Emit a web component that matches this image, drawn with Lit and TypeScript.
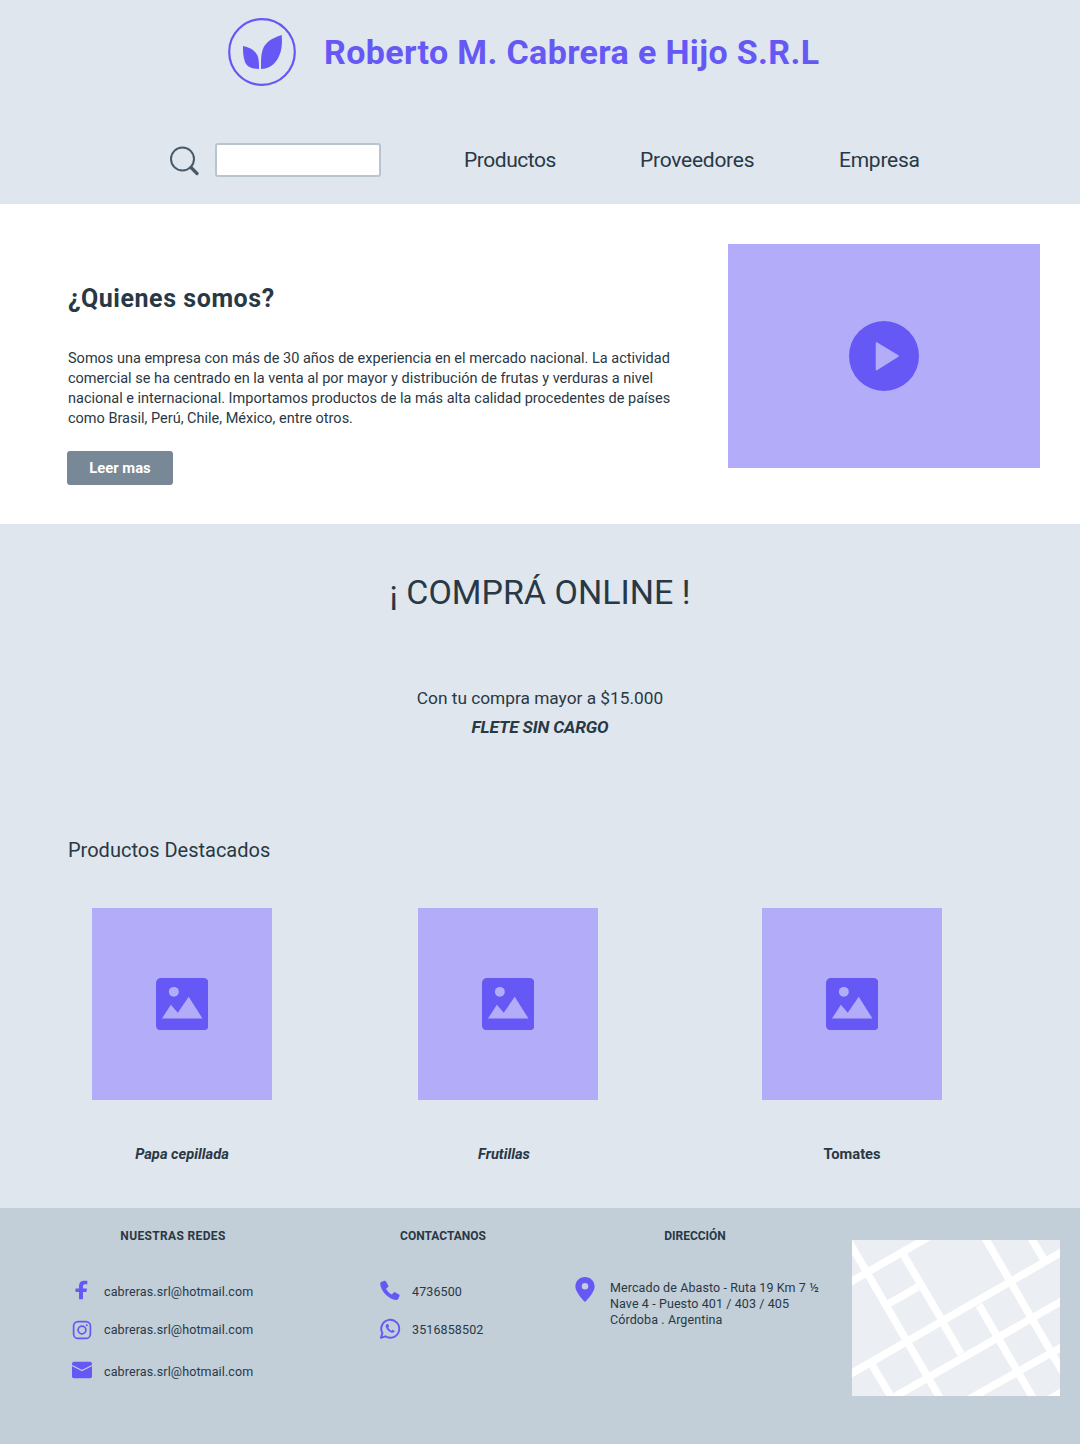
import { LitElement, html, css, svg } from "lit";
import { customElement } from "lit/decorators.js";

const pic = html`<svg class="picicon" viewBox="0 0 53 53"><rect width="53" height="53" rx="5" fill="#6558f5"/><circle cx="18" cy="14" r="5" fill="#b3acf9"/><path d="M6 41 L15 27 L22 35 L33 19 L47 41 Z" fill="#b3acf9"/></svg>`;

const roads = [
  [-5, 44, 80, -5], [-5, 136, 215, 9], [30, 164, 215, 58], [105, 166, 215, 104], [190, 163.5, 215, 149], [36, 64, 66, 47],
  [-4, 0, 92, 165], [51, 14, 91, 82], [132, -4, 216, 141], [178, -4, 192, 20], [91, 83, 109, 114],
  [127, 65, 185, 165], [20, 125, 44, 165],
];

@customElement("app-root")
export class AppRoot extends LitElement {
  static styles = css`
    :host { display: block; width: 1080px; height: 1444px; font-family: Roboto, "Liberation Sans", sans-serif; color: #293845; overflow: hidden; }
    .top { background: #dfe6ee; height: 204px; box-sizing: border-box; padding-top: 18px; }
    .brand { display: flex; align-items: center; height: 68px; padding-left: 228px; gap: 28px; }
    .logo { width: 68px; height: 68px; display: block; }
    .brand h1 { margin: 0; font-size: 34px; font-weight: 700; color: #6558f5; letter-spacing: 0.36px; line-height: 68px; }
    .nav { display: flex; align-items: center; margin-top: 57px; padding-left: 170px; height: 34px; }
    .search { width: 29px; height: 31px; display: block; margin-right: 16px; }
    .input { width: 166px; height: 34px; box-sizing: border-box; background: #fff; border: 2px solid #b8c4ce; border-radius: 3px; margin-right: 83px; }
    .nav a { font-size: 21px; letter-spacing: -0.25px; color: #293845; }
    .nav a:nth-of-type(1) { width: 176px; letter-spacing: -0.45px; }
    .nav a:nth-of-type(2) { width: 199px; }
    .hero { background: #fff; height: 320px; display: flex; justify-content: space-between; padding: 40px 40px 0 68px; box-sizing: border-box; }
    .hero h2 { margin: 40px 0 0; font-size: 25px; line-height: 30px; font-weight: 700; letter-spacing: 0.55px; }
    .hero p { margin: 35px 0 0; font-size: 14.5px; line-height: 20px; white-space: nowrap; }
    .btn { margin: 22px 0 0 -1px; width: 106px; height: 34px; border-radius: 3px; background: #788896; color: #fff; font-weight: 700; font-size: 14.8px; display: flex; align-items: center; justify-content: center; }
    .video { width: 312px; height: 224px; background: #b3acf9; display: flex; align-items: center; justify-content: center; }
    .video svg { width: 70px; height: 70px; }
    .shop { background: #dfe6ee; height: 684px; box-sizing: border-box; padding-top: 46px; }
    .shop h2 { margin: 0; text-align: center; font-weight: 400; font-size: 34px; line-height: 44px; }
    .promo { margin-top: 70px; text-align: center; font-size: 17.3px; line-height: 29px; }
    .promo b { font-style: italic; display: block; letter-spacing: -0.15px; }
    .shop h3 { margin: 94px 0 0 68px; font-size: 20px; font-weight: 400; line-height: 28px; }
    .cards { display: grid; grid-template-columns: 326px 344px 180px; margin: 44px 0 0 92px; }
    .card { width: 180px; }
    .img { width: 180px; height: 192px; background: #b3acf9; display: flex; align-items: center; justify-content: center; }
    .picicon { width: 52.5px; height: 52.5px; display: block; }
    .card div.l { margin-top: 44px; text-align: center; font-size: 14.7px; line-height: 20px; font-weight: 700; font-style: italic; }
    .card div.f { padding-right: 8px; }
    .card div.n { font-style: normal; }
    .foot { background: #c2ced8; height: 236px; display: grid; grid-template-columns: 308px 195px 277px 208px; padding-left: 72px; box-sizing: border-box; }
    .col h4 { margin: 20px 0 0; font-size: 12px; line-height: 16px; font-weight: 700; text-align: center; }
    .row { display: flex; align-items: center; font-size: 12.5px; line-height: 20px; letter-spacing: 0.12px; white-space: nowrap; }
    .row svg { width: 20px; height: 20px; margin-right: 12px; flex: none; display: block; overflow: visible; }
    .rows { display: flex; flex-direction: column; gap: 18px; margin-top: 38px; }
    .rows .row:nth-child(3) { margin-top: 4px; }
    .row svg.up { transform: translateY(-1.5px); }
    .addr { display: flex; margin-top: 36px; font-size: 12.5px; line-height: 16px; letter-spacing: 0.1px; white-space: nowrap; }
    .addr svg { width: 20px; height: 25px; margin: -3px 15px 0 0; flex: none; display: block; }
    .map { width: 208px; height: 156px; margin-top: 32px; display: block; background: #ebeff4; }
    .c1 h4 { width: 202px; letter-spacing: 0.35px; }
    .c2 h4 { width: 126px; }
    .c3 h4 { width: 240px; }
  `;

  render() {
    return html`
      <div class="top">
        <div class="brand">
          <svg class="logo" viewBox="0 0 68 68">
            <circle cx="34" cy="34" r="32.8" fill="none" stroke="#6558f5" stroke-width="2.2"/>
            <path d="M33 51 C33 40 33 31 38 26 C42 21 48 19 53.7 17 C54.5 27 53.5 35 49 42 C45 48 39 51 33 51 Z" fill="#6558f5"/>
            <path d="M15 28 C22 29 28 33 30 39 C31 43 31 47 31 51 C24 51 19 49 17 44 C15 39 15 33 15 28 Z" fill="#6558f5"/>
          </svg>
          <h1>Roberto M. Cabrera e Hijo S.R.L</h1>
        </div>
        <div class="nav">
          <svg class="search" viewBox="0 0 29 31" fill="none" stroke="#47596a">
            <circle cx="12.5" cy="14" r="11.5" stroke-width="2"/>
            <path d="M21 22.5 L27 28.5" stroke-width="3.2" stroke-linecap="round"/>
          </svg>
          <div class="input"></div>
          <a>Productos</a><a>Proveedores</a><a>Empresa</a>
        </div>
      </div>
      <div class="hero">
        <div>
          <h2>¿Quienes somos?</h2>
          <p>Somos una empresa con más de 30 años de experiencia en el mercado nacional. La actividad<br>comercial se ha centrado en la venta al por mayor y distribución de frutas y verduras a nivel<br>nacional e internacional. Importamos productos de la más alta calidad procedentes de países<br>como Brasil, Perú, Chile, México, entre otros.</p>
          <div class="btn">Leer mas</div>
        </div>
        <div class="video">
          <svg viewBox="0 0 70 70"><circle cx="35" cy="35" r="35" fill="#6558f5"/><path d="M27.5 22 L49 35 L27.5 48.5 Z" fill="#b3acf9" stroke="#b3acf9" stroke-width="1.5" stroke-linejoin="round"/></svg>
        </div>
      </div>
      <div class="shop">
        <h2>¡ COMPRÁ ONLINE !</h2>
        <div class="promo">Con tu compra mayor a $15.000<b>FLETE SIN CARGO</b></div>
        <h3>Productos Destacados</h3>
        <div class="cards">
          <div class="card"><div class="img">${pic}</div><div class="l">Papa cepillada</div></div>
          <div class="card"><div class="img">${pic}</div><div class="l f">Frutillas</div></div>
          <div class="card"><div class="img">${pic}</div><div class="l n">Tomates</div></div>
        </div>
      </div>
      <div class="foot">
        <div class="col c1">
          <h4>NUESTRAS REDES</h4>
          <div class="rows">
            <div class="row"><svg viewBox="0 0 20 20"><path d="M7 17.3 V10 H3.5 V6.5 H7 V4 C7 .5 9 -1.3 12 -1.3 H15.3 V2.2 H13 C11.5 2.2 11 3 11 4.2 V6.5 H15 L14.4 10 H11 V17.3 Z" fill="#6558f5"/></svg>cabreras.srl@hotmail.com</div>
            <div class="row"><svg viewBox="0 0 20 20" fill="none" stroke="#6558f5" stroke-width="1.7"><rect x="1.6" y="1.6" width="16.8" height="16.8" rx="4.5"/><circle cx="10" cy="10" r="3.9"/><circle cx="14.8" cy="5.2" r="1" fill="#6558f5" stroke="none"/></svg>cabreras.srl@hotmail.com</div>
            <div class="row"><svg viewBox="0 0 20 20"><rect x="0" y="-.3" width="20" height="16.6" rx="2" fill="#6558f5"/><path d="M0 3.5 L10 8.5 L20 3.5" fill="none" stroke="#c2ced8" stroke-width="1.3"/></svg>cabreras.srl@hotmail.com</div>
          </div>
        </div>
        <div class="col c2">
          <h4>CONTACTANOS</h4>
          <div class="rows">
            <div class="row"><svg class="up" viewBox="0 0 20 20"><path d="M4.2 .3 L1.2 1.6 C.3 2.1 .1 3 .3 4.2 C1.6 11.5 8 17.8 15.4 19.4 C16.6 19.7 17.6 19.3 18.2 18.4 L19.5 15.4 C19.7 14.9 19.6 14.4 19.1 14.1 L15 11.8 C14.5 11.5 14 11.6 13.6 12 L11.9 14 C9.3 12.7 7.4 10.8 6.1 8.2 L8.1 6.4 C8.5 6 8.6 5.5 8.3 5 L6 .9 C5.6 .3 4.9 .1 4.2 .3 Z" fill="#6558f5"/></svg>4736500</div>
            <div class="row"><svg class="up" viewBox="0 0 20 20"><path d="M.9 19.3 L2.4 14.6 A9 9 0 1 1 5.4 17.8 Z" fill="none" stroke="#6558f5" stroke-width="1.9" stroke-linejoin="round"/><path d="M7 5.4 C6 5.8 5.3 7 5.8 8.6 C6.6 11 9 13.4 11.6 14.2 C13 14.6 14.4 13.8 14.7 12.6 L12.6 11.2 L11.4 12.2 C10 11.6 8.8 10.3 8.2 9 L9.2 7.8 L8 5.4 Z" fill="#6558f5"/></svg>3516858502</div>
          </div>
        </div>
        <div class="col c3">
          <h4>DIRECCIÓN</h4>
          <div class="addr">
            <svg viewBox="0 0 20 26"><path fill-rule="evenodd" d="M10 0 C15.5 0 20 4.3 20 9.8 C20 15 14 22 10 26 C6 22 0 15 0 9.8 C0 4.3 4.5 0 10 0 Z M10 6.2 A3.4 3.4 0 1 0 10 13 A3.4 3.4 0 1 0 10 6.2 Z" fill="#6558f5"/></svg>
            <div>Mercado de Abasto - Ruta 19 Km 7 ½<br>Nave 4 - Puesto 401 / 403 / 405<br>Córdoba . Argentina</div>
          </div>
        </div>
        <svg class="map" viewBox="0 0 208 156">
          ${roads.map((r) => svg`<line x1=${r[0]} y1=${r[1]} x2=${r[2]} y2=${r[3]} stroke="#fff" stroke-width="7.5"/>`)}
        </svg>
      </div>
    `;
  }
}
